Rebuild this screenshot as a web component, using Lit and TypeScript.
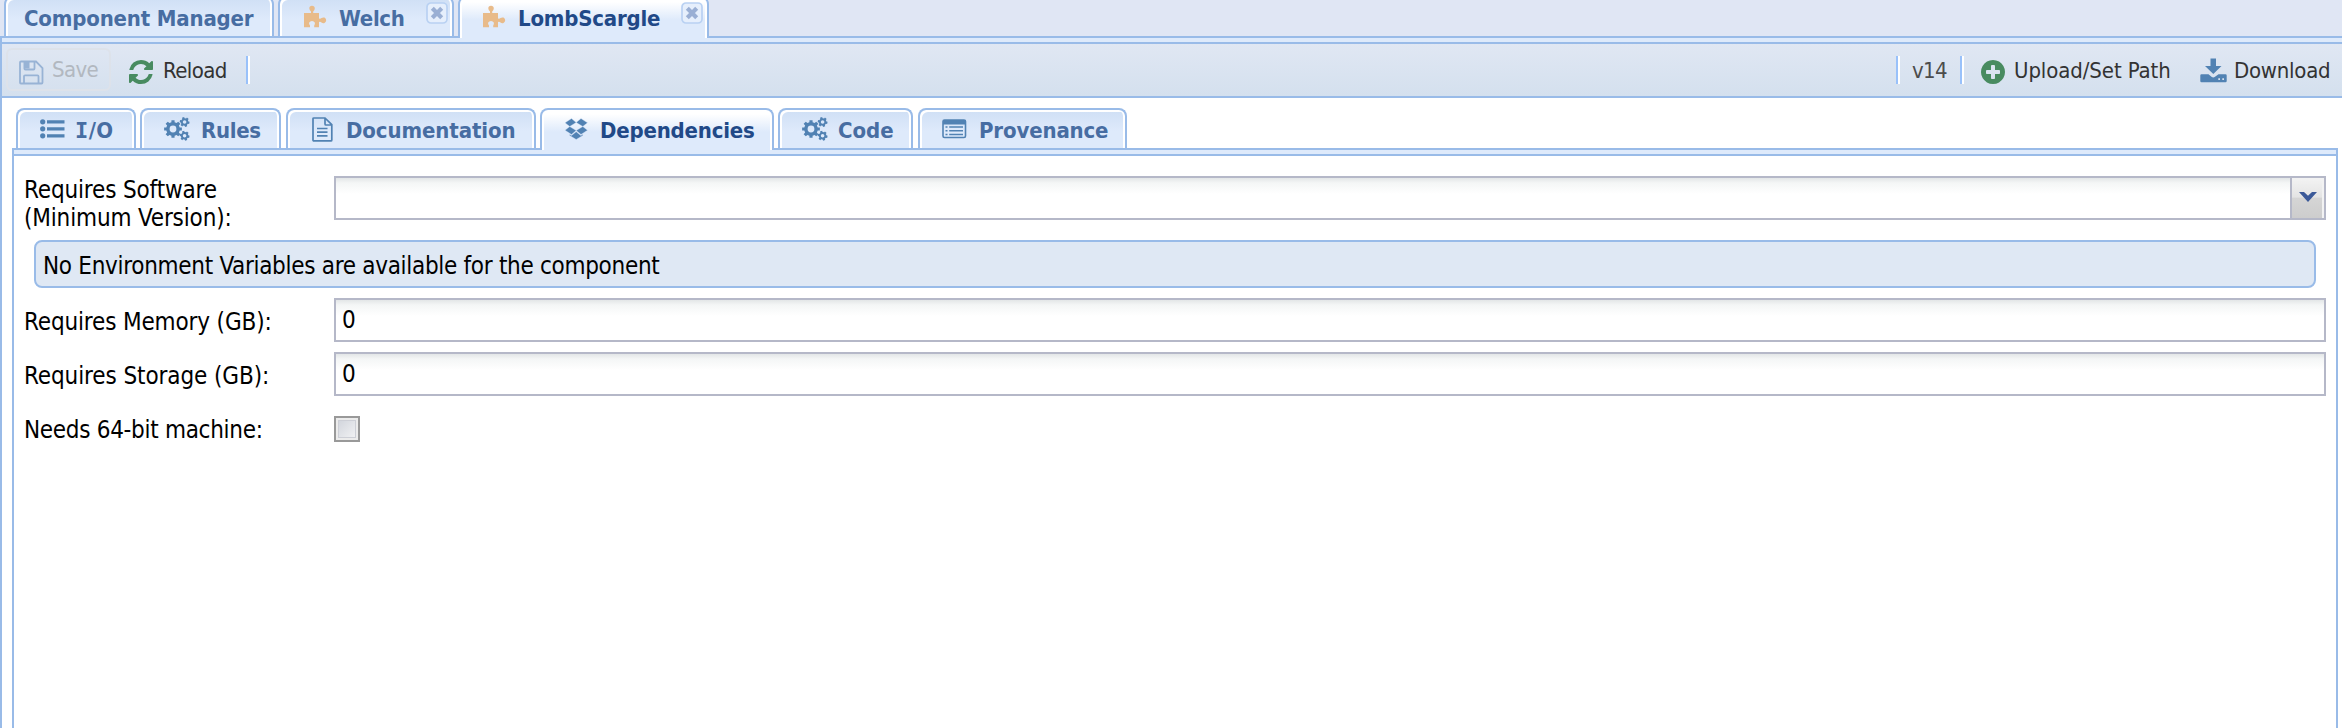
import { LitElement, html, css, svg } from "lit";
import { customElement } from "lit/decorators.js";

type TabDef = { label: unknown; icon?: string; iw?: number; gap?: number; width: number; pad: number; active?: boolean; closable?: boolean; ls: number };

const gear = (cx: number, cy: number, r: number, hole: number, teeth: number, depth: number, rot = 0) => {
  const pts: string[] = [];
  const step = (Math.PI * 2) / teeth;
  for (let i = 0; i < teeth; i++) {
    const a = i * step + rot;
    for (const [o, rr] of [[-0.3, r - depth], [-0.22, r], [0.22, r], [0.3, r - depth]]) {
      pts.push(`${(cx + Math.cos(a + o * step) * rr).toFixed(2)} ${(cy + Math.sin(a + o * step) * rr).toFixed(2)}`);
    }
  }
  return `M${pts.join("L")}ZM${cx - hole} ${cy}a${hole} ${hole} 0 1 0 ${hole * 2} 0a${hole} ${hole} 0 1 0 ${-hole * 2} 0Z`;
};

const ICONS: Record<string, unknown> = {
  puzzle: svg`<svg width="24" height="24" viewBox="0 0 24 24"><path d="M1 8H8V6.500Q6.300 5 6.300 3.300Q6.300 0.800 9 0.800T11.800 3.300Q11.800 5 10.200 6.500V8H16V13.500Q17.500 14 18.500 13Q20 12 21.500 12.600Q23.200 13.500 23.200 15.300T21.500 18Q20 18.800 18.500 17.500Q17.500 16.500 16 17V22.200H11.200V20.500Q12.300 19 11.800 17.500Q11 16 9 16T6.200 17.500Q5.600 19 7 20.500V22.200H1Z" fill="#e8bb8a"/></svg>`,
  save: svg`<svg width="25" height="25" viewBox="0 0 25 25" fill="none" stroke="#98b3d5" stroke-width="1.8"><path d="M2 1.500H17L23.500 8V22.500Q23.500 23.500 22.500 23.500H2Q1 23.500 1 22.500V2.500Q1 1.500 2 1.500ZM5 23V16.300Q5 15.300 6 15.300H18.500Q19.500 15.300 19.500 16.300V23M5.400 2V8.500Q5.400 9.500 6.400 9.500H14.500Q15.500 9.500 15.500 8.500V2"/><path d="M5 2H10.500V8.500H5Z" fill="#98b3d5" stroke="none"/></svg>`,
  refresh: svg`<svg width="24" height="24" viewBox="128 128 1536 1536"><path fill="#488b60" d="M1639 1056q0 5-1 7-64 268-268 434.500t-478 166.500q-146 0-282.500-55t-243.500-157l-129 129q-19 19-45 19t-45-19-19-45v-448q0-26 19-45t45-19h448q26 0 45 19t19 45-19 45l-137 137q71 66 161 102t187 36q134 0 250-65t186-179q11-17 53-117 8-23 30-23h192q13 0 22.500 9.500t9.500 22.500zm25-800v448q0 26-19 45t-45 19h-448q-26 0-45-19t-19-45 19-45l138-138q-148-137-349-137-134 0-250 65t-186 179q-11 17-53 117-8 23-30 23h-199q-13 0-22.500-9.500t-9.500-22.500v-7q65-268 270-434.500t480-166.500q146 0 284 55.500t245 156.500l130-129q19-19 45-19t45 19 19 45z"/></svg>`,
  plus: svg`<svg width="24" height="24" viewBox="128 128 1536 1536"><path fill="#488b60" d="M1344 960v-128q0-26-19-45t-45-19h-256v-256q0-26-19-45t-45-19h-128q-26 0-45 19t-19 45v256h-256q-26 0-45 19t-19 45v128q0 26 19 45t45 19h256v256q0 26 19 45t45 19h128q26 0 45-19t19-45v-256h256q26 0 45-19t19-45zm320-64q0 209-103 385.500t-279.500 279.500-385.500 103-385.500-103-279.500-279.500-103-385.500 103-385.500 279.500-279.500 385.500-103 385.500 103 279.500 279.500 103 385.500z"/></svg>`,
  download: svg`<svg width="27" height="25" viewBox="0 0 27 25" fill="#5182b3"><path d="M10.500 0.500H16V8H21.500L13.300 16L5 8H10.500Z"/><path fill-rule="evenodd" d="M1.500 16.300H8.500L11.500 18.800Q13.300 20 15 18.800L18.500 16.300H25.500Q26.700 16.300 26.700 17.500V23Q26.700 24.300 25.500 24.300H1.500Q0.300 24.300 0.300 23V17.500Q0.300 16.300 1.500 16.300ZM18.300 20.200V22H20V20.200ZM22.300 20.200V22H24V20.200Z"/></svg>`,
  list: svg`<svg width="25" height="20" viewBox="0 0 25 20" fill="#5182b3"><circle cx="2.700" cy="2.800" r="2.600"/><circle cx="2.700" cy="9.800" r="2.600"/><circle cx="2.700" cy="16.800" r="2.600"/><path d="M7 1.200H24.500V4.400H7ZM7 8.200H24.500V11.400H7ZM7 15.200H24.500V18.400H7Z"/></svg>`,
  cogs: svg`<svg width="26" height="24" viewBox="0 0 26 24" fill="#5182b3" fill-rule="evenodd"><path d="${gear(9, 12, 9, 3.4, 8, 2.1, 0)}"/><path d="${gear(20.6, 5, 5, 1.8, 6, 1.2, 0.2)}"/><path d="${gear(20.6, 18.8, 5, 1.8, 6, 1.2, 0.2)}"/></svg>`,
  doc: svg`<svg width="21" height="25" viewBox="0 0 21 25" fill="none" stroke="#5182b3" stroke-width="1.700"><path d="M1 1.900Q1 1 1.900 1H13L19.800 7.700V22.900Q19.800 23.900 18.900 23.900H1.900Q1 23.900 1 22.900ZM13 1V7Q13 8 14 8H19.800M5 11.500H15.500M5 15.200H15.500M5 18.800H15.500"/></svg>`,
  dropbox: svg`<svg width="23" height="22" viewBox="0 0 23 22" fill="#5182b3"><path d="M6.500 0.500L11.200 4.500L4.700 8.500L0 4.800ZM16 0.500L22.500 4.800L17.800 8.500L11.200 4.500ZM4.700 8.500L11.200 12.500L6.500 16.500L0 12.300ZM17.800 8.500L22.500 12.300L16 16.500L11.200 12.500ZM11.200 13.700L15.900 17.500L17.900 16.300V17.500L11.200 21.500L4.600 17.500V16.300L6.500 17.500Z" stroke="#dce8f9" stroke-width=".4"/></svg>`,
  table: svg`<svg width="25" height="20" viewBox="0 0 25 20" fill="#5182b3"><rect x="1" y="1" width="22.500" height="17.500" rx="1.500" fill="none" stroke="#5182b3" stroke-width="1.600"/><path d="M1 1H23.500V5.500H1ZM3.500 7.300H5.500V8.800H3.500ZM3.500 11H5.500V12.500H3.500ZM3.500 14.700H5.500V16.200H3.500ZM7.200 7.300H21V8.800H7.200ZM7.200 11H21V12.500H7.200ZM7.200 14.700H21V16.200H7.200Z"/></svg>`,
  close: svg`<svg width="22" height="22" viewBox="0 0 22 22"><rect x="1" y="1" width="20" height="20" rx="4" fill="#e6effc" stroke="#b9d1f2" stroke-width="1.700"/><path d="M6.300 6.300L15.700 15.700M15.700 6.300L6.300 15.700" stroke="#9aafd4" stroke-width="4.200"/></svg>`,
  chevron: svg`<svg width="20" height="12" viewBox="0 0 20 12"><path d="M1 1H6L10 4.700L14 1H19L10 11Z" fill="#3b5998"/></svg>`,
};

const OUTER: TabDef[] = [
  { label: "Component Manager", width: 270, pad: 20, ls: -0.17 },
  { label: "Welch", icon: "puzzle", iw: 36, width: 176, pad: 25, closable: true, ls: -0.3 },
  { label: "LombScargle", icon: "puzzle", iw: 36, width: 251, pad: 24, active: true, closable: true, ls: -0.2 },
];
const INNER: TabDef[] = [
  { label: html`<span class="slab">I</span>/O`, icon: "list", iw: 35, width: 120, pad: 24, ls: 0.4 },
  { label: "Rules", icon: "cogs", iw: 37, width: 141, pad: 24, ls: -0.3 },
  { label: "Documentation", icon: "doc", iw: 34, gap: 1, width: 250, pad: 26, ls: -0.1 },
  { label: "Dependencies", icon: "dropbox", iw: 35, width: 234, pad: 25, active: true, ls: -0.2 },
  { label: "Code", icon: "cogs", iw: 36, width: 135, pad: 24, ls: 0 },
  { label: "Provenance", icon: "table", iw: 37, gap: 1, width: 209, pad: 24, ls: -0.15 },
];

@customElement("app-root")
export class AppRoot extends LitElement {
  static styles = css`
    :host { display: block; height: 728px; overflow: hidden; background: #fff; font-family: "DejaVu Sans Condensed", "DejaVu Sans", sans-serif; font-stretch: condensed; color: #000; }
    * { box-sizing: border-box; }
    svg { display: block; }
    .page { display: flex; flex-direction: column; height: 728px; }
    .strip { display: flex; gap: 4px; }
    .outer { height: 36px; padding-left: 4px; background: #e0e6f4; }
    .inner { height: 40px; padding-left: 4px; }
    .tab { display: flex; align-items: center; flex: none; position: relative; height: 40px; border: 2px solid #99bbe8; border-bottom: 0; border-radius: 8px 8px 0 0; box-shadow: inset 2px 2px 0 #fff, inset -2px 0 0 #fff; background: linear-gradient(#cfdff5, #deeafb 55%, #deeafb); color: #476da2; font-size: 22px; font-weight: bold; white-space: nowrap; }
    .outer .tab { margin-top: -4px; }
    .tab.active { height: 42px; background: linear-gradient(#fff, #fff 10%, #deeafb 55%, #deeafb); color: #214987; z-index: 1; }
    .tab.active { padding-bottom: 2px; }
    .name { padding-top: 2px; }
    .slab { font-family: "DejaVu Sans Mono", monospace; }
    .ic { flex: none; }
    .close { position: absolute; right: 4px; top: 4px; }
    .bar { height: 8px; flex: none; border: 2px solid #99bbe8; border-right: 0; background: #deeafb; }
    .work { flex: 1; display: flex; flex-direction: column; border-left: 2px solid #99bbe8; }
    .toolbar { flex: none; height: 54px; display: flex; align-items: center; border-bottom: 2px solid #99bbe8; background: linear-gradient(#e0e7f3, #d4e0ee); font-size: 22px; color: #333; padding: 0 13px 0 4px; white-space: nowrap; }
    .btn { display: flex; align-items: center; }
    .btn .ic { padding-top: 3px; }
    .save { width: 105px; height: 43px; margin-top: -1px; border: 2px solid #dde2ea; border-radius: 6px; padding-left: 11px; color: #b2b8c0; }
    .save .ic { width: 33px; }
    .save .ic { padding-top: 5px; }
    .reload { margin-left: 18px; width: 117px; }
    .reload .ic { width: 34px; }
    .sep { width: 4px; height: 28px; border-left: 2px solid #99c1fa; background: #fff; }
    .grow { flex: 1; }
    .ver { color: #4c4c4c; width: 60px; padding-left: 12px; }
    .up { width: 236px; padding-left: 17px; }
    .up .ic { width: 33px; }
    .down { width: 129px; }
    .down .ic { width: 34px; padding-top: 0; }
    .panel { flex: 1; display: flex; flex-direction: column; padding: 10px 4px 0 10px; }
    .body { flex: 1; border: 2px solid #99bbe8; border-top: 0; border-bottom: 0; padding: 20px 10px 0 10px; font-size: 24px; line-height: 28px; }
    .panel .bar { border-right: 2px solid #99bbe8; }
    .row { display: flex; height: 44px; margin-bottom: 10px; }
    .row.first { margin-bottom: 20px; }
    .lab { width: 310px; flex: none; padding-top: 10px; white-space: nowrap; }
    .first .lab { padding-top: 0; }
    .field { flex: 1; height: 44px; border: 2px solid #b5b8c8; background: linear-gradient(#e3e6e7, #f4f6f6 5px, #fff 16px); padding: 6px; display: flex; }
    .combo { padding: 0; justify-content: flex-end; }
    .trigger { width: 34px; border-left: 2px solid #b5b8c8; box-shadow: inset -2px 2px 0 #f2f2f2; background: linear-gradient(#f3f3f3, #e4e4e4 48%, #d5d5d5 50%, #cdcdcd); display: flex; justify-content: center; padding-top: 13px; }
    .info { margin: 0 10px 10px 10px; height: 48px; border: 2px solid #99bbe8; border-radius: 8px; background: #dfe8f4; padding: 10px 7px 0; }
    .check { width: 26px; height: 26px; margin-top: 10px; border: 2px solid #999; background: linear-gradient(135deg, #cdd1d9, #f6f6f7); box-shadow: inset 0 0 0 2px #ececec, inset 0 0 0 3px #cdcfd6; }
  `;

  private tab(t: TabDef) {
    return html`<div class="tab ${t.active ? "active" : ""}" style="width:${t.width}px;padding-left:${t.pad - 2}px;margin-left:${t.gap ?? 0}px">
      ${t.icon ? html`<span class="ic" style="width:${t.iw}px">${ICONS[t.icon]}</span>` : null}
      <span class="name" style="letter-spacing:${t.ls}px">${t.label}</span>
      ${t.closable ? html`<span class="close">${ICONS.close}</span>` : null}
    </div>`;
  }

  private text(label: string, ls: number) {
    return html`<span style="letter-spacing:${ls}px">${label}</span>`;
  }

  render() {
    return html`<div class="page">
      <div class="strip outer">${OUTER.map((t) => this.tab(t))}</div>
      <div class="bar"></div>
      <div class="work">
        <div class="toolbar">
          <div class="btn save"><span class="ic">${ICONS.save}</span>${this.text("Save", -0.6)}</div>
          <div class="btn reload"><span class="ic">${ICONS.refresh}</span>${this.text("Reload", -0.6)}</div>
          <div class="sep"></div>
          <div class="grow"></div>
          <div class="sep"></div>
          <div class="ver">${this.text("v14", -0.7)}</div>
          <div class="sep"></div>
          <div class="btn up"><span class="ic">${ICONS.plus}</span>${this.text("Upload/Set Path", -0.1)}</div>
          <div class="btn down"><span class="ic">${ICONS.download}</span>${this.text("Download", -0.25)}</div>
        </div>
        <div class="panel">
          <div class="strip inner">${INNER.map((t) => this.tab(t))}</div>
          <div class="bar"></div>
          <div class="body">
            <div class="row first">
              <div class="lab">${this.text("Requires Software", -0.15)}<br />${this.text("(Minimum Version):", -0.15)}</div>
              <div class="field combo"><div class="trigger">${ICONS.chevron}</div></div>
            </div>
            <div class="info">${this.text("No Environment Variables are available for the component", -0.3)}</div>
            <div class="row"><div class="lab">${this.text("Requires Memory (GB):", -0.15)}</div><div class="field">0</div></div>
            <div class="row"><div class="lab">${this.text("Requires Storage (GB):", -0.1)}</div><div class="field">0</div></div>
            <div class="row"><div class="lab">${this.text("Needs 64-bit machine:", -0.3)}</div><div class="check"></div></div>
          </div>
        </div>
      </div>
    </div>`;
  }
}
